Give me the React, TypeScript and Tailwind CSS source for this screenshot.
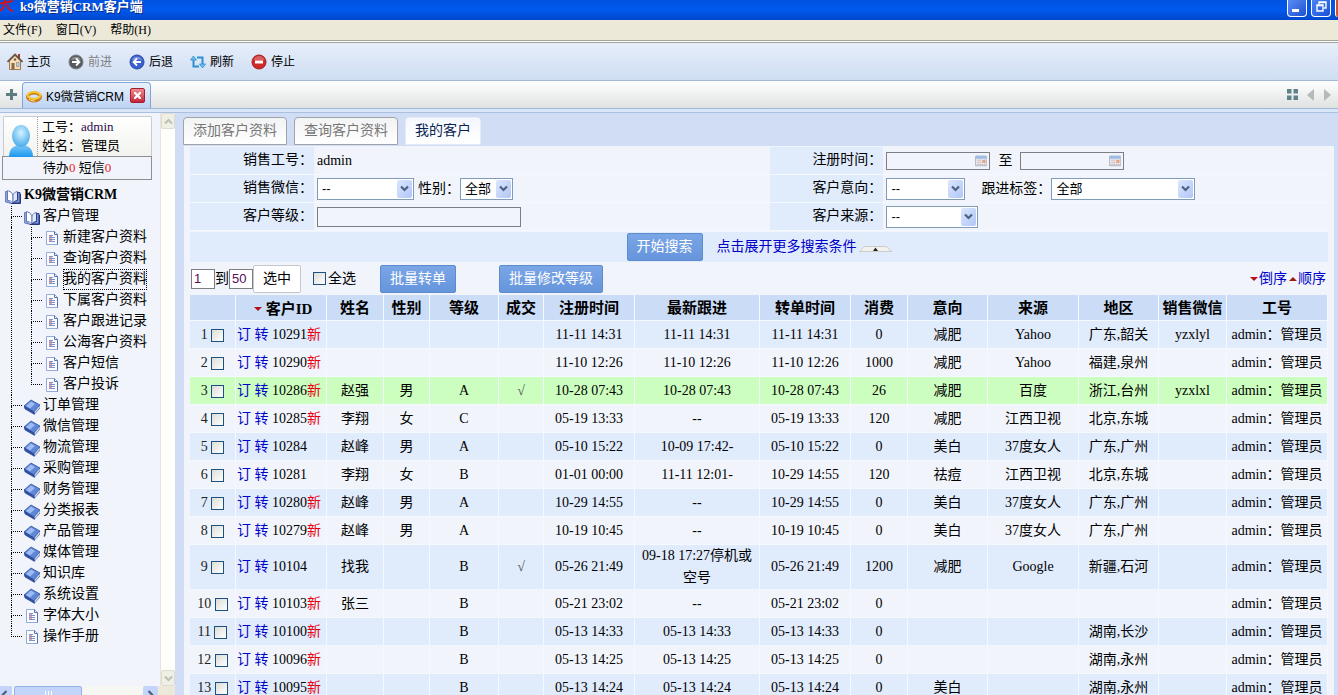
import { useState } from 'react'
import type { ReactNode } from 'react'
import clsx from 'clsx'

type Customer = {
  id: string
  isNew?: boolean
  name?: string
  sex?: string
  level?: string
  deal?: boolean
  registered: string
  followed: string
  transferred: string
  spent: string
  intent?: string
  source?: string
  region?: string
  wechat?: string
}

const customers: Customer[] = [
  { id: '10291', isNew: true, registered: '11-11 14:31', followed: '11-11 14:31', transferred: '11-11 14:31', spent: '0', intent: '减肥', source: 'Yahoo', region: '广东,韶关', wechat: 'yzxlyl' },
  { id: '10290', isNew: true, registered: '11-10 12:26', followed: '11-10 12:26', transferred: '11-10 12:26', spent: '1000', intent: '减肥', source: 'Yahoo', region: '福建,泉州' },
  { id: '10286', isNew: true, name: '赵强', sex: '男', level: 'A', deal: true, registered: '10-28 07:43', followed: '10-28 07:43', transferred: '10-28 07:43', spent: '26', intent: '减肥', source: '百度', region: '浙江,台州', wechat: 'yzxlxl' },
  { id: '10285', isNew: true, name: '李翔', sex: '女', level: 'C', registered: '05-19 13:33', followed: '--', transferred: '05-19 13:33', spent: '120', intent: '减肥', source: '江西卫视', region: '北京,东城' },
  { id: '10284', name: '赵峰', sex: '男', level: 'A', registered: '05-10 15:22', followed: '10-09 17:42-', transferred: '05-10 15:22', spent: '0', intent: '美白', source: '37度女人', region: '广东,广州' },
  { id: '10281', name: '李翔', sex: '女', level: 'B', registered: '01-01 00:00', followed: '11-11 12:01-', transferred: '10-29 14:55', spent: '120', intent: '祛痘', source: '江西卫视', region: '北京,东城' },
  { id: '10280', isNew: true, name: '赵峰', sex: '男', level: 'A', registered: '10-29 14:55', followed: '--', transferred: '10-29 14:55', spent: '0', intent: '美白', source: '37度女人', region: '广东,广州' },
  { id: '10279', isNew: true, name: '赵峰', sex: '男', level: 'A', registered: '10-19 10:45', followed: '--', transferred: '10-19 10:45', spent: '0', intent: '美白', source: '37度女人', region: '广东,广州' },
  { id: '10104', name: '找我', level: 'B', deal: true, registered: '05-26 21:49', followed: '09-18 17:27停机或空号', transferred: '05-26 21:49', spent: '1200', intent: '减肥', source: 'Google', region: '新疆,石河' },
  { id: '10103', isNew: true, name: '张三', level: 'B', registered: '05-21 23:02', followed: '--', transferred: '05-21 23:02', spent: '0' },
  { id: '10100', isNew: true, level: 'B', registered: '05-13 14:33', followed: '05-13 14:33', transferred: '05-13 14:33', spent: '0', region: '湖南,长沙' },
  { id: '10096', isNew: true, level: 'B', registered: '05-13 14:25', followed: '05-13 14:25', transferred: '05-13 14:25', spent: '0', region: '湖南,永州' },
  { id: '10095', isNew: true, level: 'B', registered: '05-13 14:24', followed: '05-13 14:24', transferred: '05-13 14:24', spent: '0', intent: '美白', region: '湖南,永州' },
]

const columns = [
  { title: '', width: 'w-[46px]' },
  { title: '客户ID', width: 'w-[91px]' },
  { title: '姓名', width: 'w-[57px]' },
  { title: '性别', width: 'w-[46px]' },
  { title: '等级', width: 'w-[69px]' },
  { title: '成交', width: 'w-[45px]' },
  { title: '注册时间', width: 'w-[91px]' },
  { title: '最新跟进', width: 'w-[125px]' },
  { title: '转单时间', width: 'w-[91px]' },
  { title: '消费', width: 'w-[57px]' },
  { title: '意向', width: 'w-[80px]' },
  { title: '来源', width: 'w-[91px]' },
  { title: '地区', width: 'w-[80px]' },
  { title: '销售微信', width: 'w-[68px]' },
  { title: '工号', width: 'w-[101px]' },
]

const customerMenu = ['新建客户资料', '查询客户资料', '我的客户资料', '下属客户资料', '客户跟进记录', '公海客户资料', '客户短信', '客户投诉']

const modules = ['订单管理', '微信管理', '物流管理', '采购管理', '财务管理', '分类报表', '产品管理', '媒体管理', '知识库', '系统设置']

/* ---------- icons ---------- */

function OpenBookIcon() {
  return (
    <svg className="mt-1 h-4 w-4 shrink-0" viewBox="0 0 16 16">
      <path d="M.5 2.500h2v9l4 3-6-1.500z" fill="#8fa3dc" stroke="#5a6fb5" strokeWidth=".8" />
      <path d="M2.500 1.500L6 3l2 3v8l-2.500-2-3-.8z" fill="#fff" stroke="#5a6fb5" strokeWidth=".9" />
      <path d="M8 6c.6-2 2-3 4.500-3.500v9C10 12 9 12.500 8 14z" fill="#dfe7fc" stroke="#5a6fb5" strokeWidth=".9" />
      <path d="M12.500 3.500h2.500V14H8.500c1-1.500 2-2 4-2.500z" fill="#7c93dc" stroke="#26367c" strokeWidth=".9" />
      <path d="M6 14.500h9.500V5" fill="none" stroke="#26367c" />
    </svg>
  )
}

function BookIcon() {
  return (
    <svg className="mt-1 h-4 w-4 shrink-0" viewBox="0 0 16 16">
      <path d="M0 7L7 1l9 5-6 7z" fill="#5f87d8" stroke="#31519f" strokeWidth=".8" />
      <path d="M2 7l5-4.500L11 5 6 9.500z" fill="#9dbcf3" />
      <path d="M10 13l6-7v3l-5.500 6z" fill="#fff" stroke="#31519f" strokeWidth=".7" />
      <path d="M0 7l10 6 .5 2.500L1 10z" fill="#2d4fa6" stroke="#24408c" strokeWidth=".5" />
      <path d="M11 13.500l4.500-5" stroke="#9aa8c8" strokeWidth=".7" />
    </svg>
  )
}

function PageIcon() {
  return (
    <svg className="mt-1 h-[14px] w-3 shrink-0" viewBox="0 0 12 14">
      <path d="M.5.5h8l3 3v10H.5z" fill="#fbfcff" stroke="#93abd6" />
      <path d="M8.500.5v3h3v10" fill="none" stroke="#5573b4" />
      <path d="M3 4.500h4M3 6.500h6M3 8.500h6M3 10.500h6" stroke="#7f90cc" />
      <path d="M3 5.500h3M3 7.500h3M3 9.500h3" stroke="#e0a3a8" />
    </svg>
  )
}

function AvatarIcon() {
  return (
    <svg className="mt-2 h-8 w-6 shrink-0" viewBox="0 0 24 32">
      <defs>
        <radialGradient id="face" cx=".5" cy=".35" r=".7">
          <stop offset="0" stopColor="#d4f3ff" />
          <stop offset="1" stopColor="#3ba6ea" />
        </radialGradient>
        <linearGradient id="torso" x1="0" x2="0" y1="0" y2="1">
          <stop offset="0" stopColor="#7cc9f7" />
          <stop offset="1" stopColor="#1c96f0" />
        </linearGradient>
      </defs>
      <path d="M0 32c0-8 4-12 12-12s12 4 12 12z" fill="url(#torso)" />
      <ellipse cx="12" cy="11" rx="9" ry="11" fill="url(#face)" />
    </svg>
  )
}

function HomeIcon() {
  return (
    <svg className="h-[18px] w-4" viewBox="0 0 16 18">
      <path d="M11 1h2v5h-2z" fill="#a33b2a" />
      <path d="M2.500 8L8 2.500 13.500 8v8.500h-11z" fill="#f6dfb8" stroke="#9c7a55" />
      <path d="M.5 9L8 1.500 15.500 9" fill="none" stroke="#6b5040" strokeWidth="1.600" />
      <path d="M4.500 10h3v6.500h-3z" fill="#8a6844" />
      <path d="M9.500 9.500h2.500v4H9.500z" fill="#b8d6ee" stroke="#8a7a6a" strokeWidth=".6" />
      <circle cx="8" cy="6.500" r="1.200" fill="#7a5a44" />
    </svg>
  )
}

function ArrowIcon({ back }: { back?: boolean }) {
  return (
    <svg className="h-4 w-4" viewBox="0 0 16 16">
      <circle cx="8" cy="8" r="7" fill={back ? '#3a60cf' : '#55585c'} stroke={back ? '#2a48a8' : '#7b7e82'} />
      <path d="M3 6a5.500 5.500 0 0110 0c-3-1-7-1-10 0z" fill="#fff" opacity=".35" />
      <path d={back ? 'M12 8H5M8 4.500L4.500 8 8 11.500' : 'M4 8h7M8 4.500L11.500 8 8 11.500'} fill="none" stroke="#fff" strokeWidth="1.800" />
    </svg>
  )
}

function RefreshIcon() {
  return (
    <svg className="h-4 w-4" viewBox="0 0 16 16">
      <g fill="none" stroke="#2f8fd0" strokeWidth="2">
        <path d="M3.500 6v6.500H9" />
        <path d="M7 3.500h5.500V10" />
      </g>
      <path d="M3.500 2L6.500 6H.5zM12.500 14l-3-4h6z" fill="#6fc0ee" stroke="#2f8fd0" strokeWidth=".8" />
    </svg>
  )
}

function StopIcon() {
  return (
    <svg className="h-4 w-4" viewBox="0 0 16 16">
      <circle cx="8" cy="8" r="7" fill="#cf2a2a" stroke="#a51c1c" />
      <path d="M2.500 6a5.800 5.800 0 0111 0z" fill="#fff" opacity=".25" />
      <path d="M4 6.500h8v3H4z" fill="#fff" />
    </svg>
  )
}

function RingIcon() {
  return (
    <svg className="h-4 w-4" viewBox="0 0 16 16">
      <ellipse cx="8" cy="9" rx="6.500" ry="4" fill="none" stroke="#c9791a" strokeWidth="3" />
      <ellipse cx="8" cy="7.500" rx="6.300" ry="3.500" fill="none" stroke="#f7c52c" strokeWidth="2" />
      <path d="M3 11c2 2 4 2 6 2" fill="none" stroke="#ffe89a" />
    </svg>
  )
}

function CalendarIcon() {
  return (
    <svg className="h-3 w-[14px]" viewBox="0 0 14 12">
      <path d="M.5.5h13v11H.5z" fill="#fff" stroke="#a3acc0" />
      <path d="M1 0h12v3.500H1z" fill="#9fbbe6" />
      <path d="M1 5h12M1 7.500h12M1 10h12M3.500 4v7M6 4v7M8.500 4v7M11 4v7" stroke="#c9b9bd" strokeWidth=".9" />
      <path d="M9 5h3v3H9z" fill="#ee9a72" />
    </svg>
  )
}

function Chevron({ className }: { className?: string }) {
  return (
    <svg className={clsx('h-[7px] w-[9px]', className)} viewBox="0 0 9 7">
      <path d="M1 1.500L4.500 5 8 1.500" fill="none" stroke="currentColor" strokeWidth="2.200" />
    </svg>
  )
}

function Caret({ up }: { up?: boolean }) {
  return (
    <svg className="inline h-1 w-2" viewBox="0 0 8 4">
      <path d={up ? 'M0 4L4 0l4 4z' : 'M0 0h8L4 4z'} fill={up ? '#9c1c10' : '#b4101c'} />
    </svg>
  )
}

/* ---------- controls ---------- */

function Select({ id, label, width, options }: { id: string; label?: string; width: string; options: string[] }) {
  return (
    <span className={clsx('relative inline-block h-[22px] shrink-0', width)}>
      <select id={id} aria-label={label} className="block h-full w-full appearance-none border border-[#7f9db9] bg-white pr-5 pl-1 font-[Liberation_Sans,Noto_Sans_CJK_SC,sans-serif] text-[13px] leading-5 text-black">
        {options.map(o => <option key={o}>{o}</option>)}
      </select>
      <span className="pointer-events-none absolute inset-y-0.5 right-0.5 flex w-[15px] items-center justify-center rounded-xs bg-linear-to-br from-[#dce7fe] to-[#b0c6f6] text-[#4d6185]">
        <Chevron />
      </span>
    </span>
  )
}

function DateInput({ id, label }: { id: string; label?: string }) {
  return (
    <span className="flex h-[18px] w-[104px] items-center border border-[#7d7d85] pr-0.5">
      <input id={id} aria-label={label} type="text" className="h-full w-full min-w-0 bg-transparent px-1 outline-none" />
      <CalendarIcon />
    </span>
  )
}

function Checkbox({ id, label }: { id?: string; label?: string }) {
  return <input id={id} aria-label={label} type="checkbox" className="h-[13px] w-[13px] shrink-0 appearance-none border border-[#1c5180] bg-linear-to-br from-[#dcdcd7] to-white align-[-3px] checked:from-[#21a121]" />
}

function BlueButton({ children }: { children: ReactNode }) {
  return (
    <button type="button" className="h-7 rounded-xs border border-[#5c8bd0] bg-linear-to-b from-[#7ba6e6] to-[#6695dc] px-[9px] leading-6 text-white">
      {children}
    </button>
  )
}

function FormRow({ label, htmlFor, narrow, children }: { label: string; htmlFor?: string; narrow?: boolean; children: ReactNode }) {
  return (
    <div className="flex h-7 border-b border-[#f4f8ff]">
      <div className={clsx('shrink-0 bg-[#e0ebfc] pr-px text-right leading-[26px]', narrow ? 'w-[113px]' : 'w-[124px]')}>
        <label htmlFor={htmlFor}>{label}</label>
      </div>
      <div className="flex flex-1 items-center pl-[3px] whitespace-nowrap">{children}</div>
    </div>
  )
}

/* ---------- window chrome ---------- */

function TitleBar() {
  return (
    <header className="flex h-5 shrink-0 items-start justify-between overflow-hidden bg-linear-to-b from-[#0053e0] via-[#0058ee] to-[#0047cc]">
      <div className="flex items-start">
        <svg className="h-3 w-[14px]" viewBox="0 0 14 12">
          <path d="M5 0c0 5-2 9-5 11M0 3.500L13 1M8 4c-1 3 1 6 5 7.500" fill="none" stroke="#d4141c" strokeWidth="2" />
        </svg>
        <h1 className="pl-1.5 text-[13px] leading-[14px] font-bold text-white [text-shadow:1px_1px_0_#0a2a80]">k9微营销CRM客户端</h1>
      </div>
      <div className="flex gap-1">
        <button type="button" aria-label="最小化" className="flex h-[17px] w-5 items-end rounded-b-sm border border-t-0 border-white bg-linear-to-br from-[#5b8df5] to-[#1f4fd0] pb-1 pl-1">
          <span className="h-[3px] w-[7px] bg-white" />
        </button>
        <button type="button" aria-label="还原" className="flex h-[17px] w-5 items-start justify-center rounded-b-sm border border-t-0 border-white bg-linear-to-br from-[#4a83f2] to-[#1c4fd6] pt-px">
          <svg className="h-[11px] w-[11px]" viewBox="0 0 11 11">
            <path d="M3 3V1h7v6H8M3 1.500h7M1 4h6v6H1zM1 4.500h6" fill="none" stroke="#fff" strokeWidth="1.400" />
          </svg>
        </button>
        <button type="button" aria-label="关闭" className="h-[17px] w-[3px] rounded-bl-sm border-l border-white bg-[#d8502c]" />
      </div>
    </header>
  )
}

function ToolButton({ icon, children, muted }: { icon: ReactNode; children: string; muted?: boolean }) {
  return (
    <button type="button" className={clsx('flex items-center gap-1', muted && 'text-[#808080]')}>
      {icon}
      {children}
    </button>
  )
}

function Toolbar() {
  return (
    <>
      <nav className="flex h-5 shrink-0 gap-[14px] bg-[#ece9d8] pl-[3px] text-xs leading-5">
        <button type="button">文件(F)</button>
        <button type="button">窗口(V)</button>
        <button type="button">帮助(H)</button>
      </nav>
      <div className="h-[3px] shrink-0 border-y border-[#a3a29b] bg-white" />
      <div className="flex h-[38px] shrink-0 items-center gap-[17px] border-b border-[#a3b8d6] bg-linear-to-b from-[#e6eefa] to-[#cfdef3] pl-[7px] font-[Liberation_Sans,Noto_Sans_CJK_SC,sans-serif] text-xs">
        <ToolButton icon={<HomeIcon />}>主页</ToolButton>
        <ToolButton icon={<ArrowIcon />} muted>前进</ToolButton>
        <ToolButton icon={<ArrowIcon back />}>后退</ToolButton>
        <ToolButton icon={<RefreshIcon />}>刷新</ToolButton>
        <ToolButton icon={<StopIcon />}>停止</ToolButton>
      </div>
      <div className="flex h-[27px] shrink-0 items-end justify-between bg-linear-to-b from-white to-[#dfe2e1]">
        <div className="flex h-full items-end">
          <button type="button" aria-label="新标签" className="flex h-full w-[22px] items-center justify-center">
            <svg className="h-[11px] w-[11px]" viewBox="0 0 11 11"><path d="M5.500 0v11M0 5.500h11" stroke="#5c7c80" strokeWidth="3" /></svg>
          </button>
          <div className="flex h-[26px] items-center rounded-t-sm border border-b-0 border-[#7ea6dc] bg-linear-to-b from-[#e9f1fc] to-[#bcd3f2] pr-[5px] pl-[3px] font-[Liberation_Sans,Noto_Sans_CJK_SC,sans-serif] text-xs">
            <RingIcon />
            <span className="pt-0.5 pr-1.5 pl-1">K9微营销CRM</span>
            <button type="button" aria-label="关闭标签" className="flex h-[15px] w-[15px] items-center justify-center rounded-xs border border-[#a81c30] bg-linear-to-b from-[#ee8a94] to-[#c4203a]">
              <svg className="h-[7px] w-[7px]" viewBox="0 0 7 7"><path d="M0 0l7 7M7 0L0 7" stroke="#fff" strokeWidth="2.200" /></svg>
            </button>
          </div>
        </div>
        <div className="flex h-full items-center gap-2 pr-[7px]">
          <svg className="mr-px h-[11px] w-[11px]" viewBox="0 0 11 11"><path d="M0 0h4.500v4.500H0zM6.500 0H11v4.500H6.500zM0 6.500h4.500V11H0zM6.500 6.500H11V11H6.500z" fill="#5f8288" /></svg>
          <svg className="h-3 w-[7px]" viewBox="0 0 7 12"><path d="M7 0v12L0 6z" fill="#b4bab8" /></svg>
          <svg className="ml-0.5 h-3 w-[7px]" viewBox="0 0 7 12"><path d="M0 0v12l7-6z" fill="#b4bab8" /></svg>
        </div>
      </div>
      <div className="h-1 shrink-0 border-t border-[#9fb8da] bg-[#d9e6f8]" />
    </>
  )
}

/* ---------- sidebar ---------- */

// Dotted connector: elbow on top, trunk below unless this is the last node
function Branch({ last }: { last?: boolean }) {
  return (
    <span className="flex w-[11px] shrink-0 flex-col self-stretch">
      <span className="h-[11px] border-b border-l border-dotted border-black" />
      <span className={clsx('flex-1', !last && 'border-l border-dotted border-black')} />
    </span>
  )
}

function TreeNode({ icon, label, last }: { icon: ReactNode; label: string; last?: boolean }) {
  return (
    <li className="flex h-[21px]">
      <Branch last={last} />
      <a href="#" className="flex pl-0.5">
        <span className="flex w-[19px] items-start">{icon}</span>
        <span>{label}</span>
      </a>
    </li>
  )
}

function Sidebar() {
  return (
    <aside className="flex w-[175px] shrink-0 flex-col overflow-hidden border-t border-[#a9c0e0] bg-[#f1f5fb]">
      <div className="flex min-h-0 flex-1">
        <div className="min-w-0 flex-1 overflow-hidden pt-[3px]">
          <div className="mr-2 ml-[3px] flex h-10 rounded-t-xs border border-b-0 border-[#c8ccd0] bg-linear-to-b from-white to-[#f2f2ee] pl-[5px]">
            <AvatarIcon />
            <div className="ml-1 border-l border-dotted border-[#9a9a9a] pl-1 text-[13px] leading-[19px]">
              <p>工号：<a href="#" className="text-[#2a0a4a]">admin</a></p>
              <p>姓名：管理员</p>
            </div>
          </div>
          <p className="mr-2 ml-0.5 h-6 border border-[#8c8f94] text-center text-[13px] leading-[22px]">
            待办<span className="text-[#f02020]">0</span> 短信<span className="text-[#f02020]">0</span>
          </p>
          <div className="pt-[5px] leading-5 whitespace-nowrap">
            <a href="#" className="flex h-[21px] gap-[3px] pl-[5px] font-bold">
              <OpenBookIcon />
              K9微营销CRM
            </a>
            <ul className="pl-[11px]">
              <TreeNode icon={<OpenBookIcon />} label="客户管理" />
              <li className="border-l border-dotted border-black">
                <ul className="pl-[19px]">
                  {customerMenu.map((label, i) => (
                    <li key={label} className="flex h-[21px]">
                      <Branch last={i === customerMenu.length - 1} />
                      <a href="#" className="flex pl-1">
                        <span className="flex w-[17px]"><PageIcon /></span>
                        <span className={clsx(label === '我的客户资料' && 'outline-1 -outline-offset-1 outline-black outline-dotted')}>{label}</span>
                      </a>
                    </li>
                  ))}
                </ul>
              </li>
              {modules.map(label => <TreeNode key={label} icon={<BookIcon />} label={label} />)}
              <TreeNode icon={<span className="flex pl-0.5"><PageIcon /></span>} label="字体大小" />
              <TreeNode icon={<span className="flex pl-0.5"><PageIcon /></span>} label="操作手册" last />
            </ul>
          </div>
        </div>
        <div className="flex w-[15px] flex-col justify-between border-l border-[#e6e6de] bg-[#fefefa] text-[#c0c0b4]">
          <span className="flex h-4 items-center justify-center rounded-xs border border-[#dcdcd2] bg-[#f0efe6]"><Chevron className="rotate-180" /></span>
          <span className="flex h-4 items-center justify-center rounded-xs border border-[#dcdcd2] bg-[#f0efe6]"><Chevron /></span>
        </div>
      </div>
      <div className="flex h-[9px] shrink-0 items-start overflow-hidden bg-[#f6f6f2] text-[#4d6185]">
        <span className="flex h-4 w-3 shrink-0 items-center bg-[#c4d5fb]"><Chevron className="rotate-90" /></span>
        <span className="ml-0.5 flex h-4 w-[68px] shrink-0 justify-center gap-0.5 rounded-xs border border-[#98b0e8] bg-[#c4d5fb] pt-1">
          <span className="h-2 w-px bg-white" />
          <span className="h-2 w-px bg-white" />
          <span className="h-2 w-px bg-white" />
        </span>
        <span className="ml-auto flex h-4 w-[15px] shrink-0 items-center justify-center rounded-xs bg-[#c4d5fb]"><Chevron className="-rotate-90" /></span>
        <span className="h-4 w-[17px] shrink-0 bg-[#ece9d8]" />
      </div>
    </aside>
  )
}

/* ---------- main ---------- */

function SearchForm() {
  return (
    <form onSubmit={e => e.preventDefault()}>
      <div className="flex">
        <div className="w-[51%]">
          <FormRow label="销售工号：">admin</FormRow>
          <FormRow label="销售微信：" htmlFor="wechat">
            <Select id="wechat" width="w-[97px]" options={['--']} />
            <label htmlFor="sex" className="pl-1">性别：</label>
            <Select id="sex" width="w-[53px]" options={['全部', '男', '女']} />
          </FormRow>
          <FormRow label="客户等级：" htmlFor="level">
            <input id="level" type="text" className="h-5 w-[204px] border border-[#7d7d85] bg-transparent px-1" />
          </FormRow>
        </div>
        <div className="flex-1">
          <FormRow label="注册时间：" htmlFor="date-from" narrow>
            <DateInput id="date-from" />
            <label htmlFor="date-to" className="px-2">至</label>
            <DateInput id="date-to" />
          </FormRow>
          <FormRow label="客户意向：" htmlFor="intent" narrow>
            <Select id="intent" width="w-[79px]" options={['--', '减肥', '美白', '祛痘']} />
            <label htmlFor="tag" className="pl-4">跟进标签：</label>
            <Select id="tag" width="w-[144px]" options={['全部']} />
          </FormRow>
          <FormRow label="客户来源：" htmlFor="source" narrow>
            <Select id="source" width="w-[92px]" options={['--', 'Yahoo', 'Google', '百度']} />
          </FormRow>
        </div>
      </div>
      <div className="mt-px flex h-[30px] items-center justify-center bg-[#e0ebfc]">
        <BlueButton>开始搜索</BlueButton>
        <a href="#" className="flex items-center gap-0.5 pl-[14px] leading-7 text-[#0000c8]">
          点击展开更多搜索条件
          <svg className="mt-1 h-[6px] w-[33px]" viewBox="0 0 33 6">
            <path d="M0 5.500C3 5.500 3 .5 6 .5h21c3 0 3 5 6 5z" fill="#f1f1ee" stroke="#c4c4c0" strokeWidth=".8" />
            <path d="M14 5l2.500-3.500L19 5z" fill="#222" />
          </svg>
        </a>
      </div>
    </form>
  )
}

function BatchBar() {
  return (
    <div className="flex h-[33px] items-center justify-between">
      <div className="flex items-center pl-px">
        <input aria-label="起始行" defaultValue="1" className="h-5 w-6 border border-[#7d7d85] bg-white pl-0.5 font-[Liberation_Sans,sans-serif] text-[13px] text-[#5a0a5a]" />
        到
        <input aria-label="结束行" defaultValue="50" className="h-5 w-6 border border-[#7d7d85] bg-white pl-0.5 font-[Liberation_Sans,sans-serif] text-[13px] text-[#5a0a5a]" />
        <button type="button" className="h-7 rounded-xs border border-[#c4c8cc] bg-white px-[9px]">选中</button>
        <div className="flex items-center gap-0.5 pl-3">
          <Checkbox id="all" />
          <label htmlFor="all">全选</label>
        </div>
        <div className="flex gap-[43px] pl-6">
          <BlueButton>批量转单</BlueButton>
          <BlueButton>批量修改等级</BlueButton>
        </div>
      </div>
      <div className="flex gap-0.5 pr-0.5 text-[#0000c8]">
        <a href="#" className="flex items-center gap-px"><Caret />倒序</a>
        <a href="#" className="flex items-center gap-px"><Caret up />顺序</a>
      </div>
    </div>
  )
}

function CustomerTable() {
  const cell = 'border-r border-b border-[#f4f8ff] p-0 text-center'
  return (
    <table className="w-full table-fixed border-separate border-spacing-0 leading-[22px]">
      <thead>
        <tr className="h-[26px] bg-[#cbdcf7] text-[15px] whitespace-nowrap">
          {columns.map((c, i) => (
            <th key={i} className={clsx(cell, c.width, 'font-bold')}>
              {c.title === '客户ID' ? <span className="inline-flex items-center gap-1 pl-1"><Caret />{c.title}</span> : c.title}
            </th>
          ))}
        </tr>
      </thead>
      <tbody>
        {customers.map((c, i) => (
          <tr key={c.id} className={clsx('h-7', c.id === '10286' ? 'bg-[#ccffbf]' : i % 2 === 0 ? 'bg-[#e0ebfc]' : 'bg-[#f1f5fb]')}>
            <td className={clsx(cell, 'text-[#222]')}>
              {i + 1} <Checkbox label={`选择 ${c.id}`} />
            </td>
            <td className={clsx(cell, 'whitespace-nowrap')}>
              <div className="pl-px text-left">
                <a href="#" className="text-[#0000c8]">订</a> <a href="#" className="text-[#0000c8]">转</a> {c.id}
                {c.isNew && <span className="text-[#e60012]">新</span>}
              </div>
            </td>
            <td className={cell}>{c.name}</td>
            <td className={cell}>{c.sex}</td>
            <td className={cell}>{c.level}</td>
            <td className={clsx(cell, 'text-[#555]')}>{c.deal && '√'}</td>
            <td className={cell}>{c.registered}</td>
            <td className={cell}>{c.followed}</td>
            <td className={cell}>{c.transferred}</td>
            <td className={cell}>{c.spent}</td>
            <td className={cell}>{c.intent}</td>
            <td className={cell}>{c.source}</td>
            <td className={cell}>{c.region}</td>
            <td className={cell}>{c.wechat}</td>
            <td className={clsx(cell, 'whitespace-nowrap')}>admin：管理员</td>
          </tr>
        ))}
      </tbody>
    </table>
  )
}

export default function App() {
  const [tab, setTab] = useState('我的客户')

  return (
    <div className="flex h-screen flex-col overflow-hidden bg-[#d0ddf5] font-[Liberation_Serif,Noto_Sans_CJK_SC,serif] text-sm text-black">
      <TitleBar />
      <Toolbar />
      <div className="flex min-h-0 flex-1">
        <Sidebar />
        <main className="flex min-w-0 flex-1 flex-col overflow-hidden border-t border-[#a9c0e0] pr-1 pl-2">
          <div className="flex h-[33px] shrink-0 items-end gap-[7px]">
            {['添加客户资料', '查询客户资料', '我的客户'].map(t => (
              <button
                key={t}
                type="button"
                onClick={() => setTab(t)}
                className={clsx(
                  'mb-px h-7 rounded-t-sm border px-[9px] leading-6',
                  tab === t
                    ? 'border-[#e4ecf8] bg-linear-to-b from-[#f4f8fe] to-white text-[#0a2450]'
                    : 'border-[#a0a4aa] bg-linear-to-b from-[#f2f3f4] to-white text-[#777]'
                )}
              >
                {t}
              </button>
            ))}
          </div>
          <div className="ml-px min-h-0 flex-1 overflow-hidden bg-[#f1f5fb] px-1.5 pt-px">
            <SearchForm />
            <BatchBar />
            <CustomerTable />
          </div>
        </main>
      </div>
    </div>
  )
}
